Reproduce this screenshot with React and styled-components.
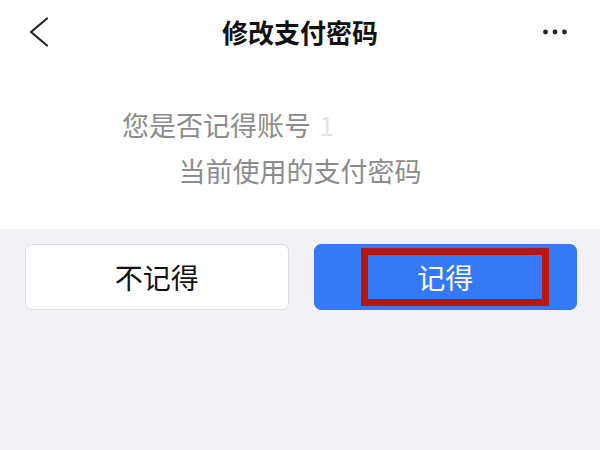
import React from "react";
import styled, { createGlobalStyle } from "styled-components";

const GlobalStyle = createGlobalStyle`
  html, body {
    margin: 0;
    padding: 0;
    background: #f2f2f6;
    font-family: "Noto Sans CJK SC", "Noto Sans", sans-serif;
  }
`;

const Page = styled.div`
  width: 600px;
  height: 450px;
  background: #f2f2f6;
  overflow: hidden;
`;

const TopPanel = styled.div`
  background: #ffffff;
  height: 229px;
`;

const NavBar = styled.div`
  display: grid;
  grid-template-columns: 90px 1fr 90px;
  align-items: center;
  height: 64px;
`;

const NavSide = styled.div`
  display: flex;
  align-items: center;
  justify-content: ${(p) => (p.$right ? "flex-end" : "flex-start")};
  padding: ${(p) => (p.$right ? "0 33px 0 0" : "0 0 0 28px")};
`;

const Title = styled.h1`
  margin: 0;
  text-align: center;
  font-size: 26px;
  font-weight: 700;
  color: #111111;
  line-height: 1;
`;

const Message = styled.div`
  padding-top: 38px;
  display: flex;
  flex-direction: column;
  align-items: center;
`;

const Line = styled.div`
  display: flex;
  align-items: center;
  justify-content: center;
  font-size: 27px;
  line-height: 46px;
  color: #8c8c8c;
  white-space: nowrap;
`;

const FaintDigit = styled.span`
  margin-left: 8px;
  color: #e4e4e4;
`;

/* blurred-out account number: left blank like the reference */
const Masked = styled.span`
  display: inline-block;
  width: 144px;
  height: 24px;
  background: #ffffff;
`;

const ButtonRow = styled.div`
  display: grid;
  grid-template-columns: 1fr 1fr;
  gap: 25px;
  padding: 15px 23px 0 25px;
`;

const ChoiceButton = styled.button`
  position: relative;
  height: 66px;
  border-radius: 7px;
  border: 1px solid ${(p) => (p.$primary ? "#3579f6" : "#dcdcdc")};
  background: ${(p) => (p.$primary ? "#3579f6" : "#ffffff")};
  color: ${(p) => (p.$primary ? "#ffffff" : "#111111")};
  font-family: "Noto Sans CJK SC", "Noto Sans", sans-serif;
  font-size: 28px;
  padding: 0;
  cursor: pointer;
`;

const Highlight = styled.span`
  position: absolute;
  left: 46px;
  top: 3px;
  width: 188px;
  height: 58px;
  box-sizing: border-box;
  border: 7px solid #b8170f;
  pointer-events: none;
`;

const BackIcon = () => (
  <svg width="22" height="30" viewBox="0 0 22 30">
    <polyline
      points="19,1.5 3,15 19,28.5"
      fill="none"
      stroke="#222222"
      strokeWidth="2.2"
      strokeLinecap="round"
      strokeLinejoin="round"
    />
  </svg>
);

const MoreIcon = () => (
  <svg width="24" height="6" viewBox="0 0 24 6">
    <circle cx="2.5" cy="3" r="2.4" fill="#222222" />
    <circle cx="12" cy="3" r="2.4" fill="#222222" />
    <circle cx="21.5" cy="3" r="2.4" fill="#222222" />
  </svg>
);

const App = () => {
  return (
    <Page>
      <GlobalStyle />
      <TopPanel>
        <NavBar>
          <NavSide>
            <BackIcon />
          </NavSide>
          <Title>修改支付密码</Title>
          <NavSide $right>
            <MoreIcon />
          </NavSide>
        </NavBar>
        <Message>
          <Line>
            您是否记得账号
            <FaintDigit>1</FaintDigit>
            <Masked />
          </Line>
          <Line>当前使用的支付密码</Line>
        </Message>
      </TopPanel>
      <ButtonRow>
        <ChoiceButton>不记得</ChoiceButton>
        <ChoiceButton $primary>
          记得
          <Highlight />
        </ChoiceButton>
      </ButtonRow>
    </Page>
  );
};

export default App;
